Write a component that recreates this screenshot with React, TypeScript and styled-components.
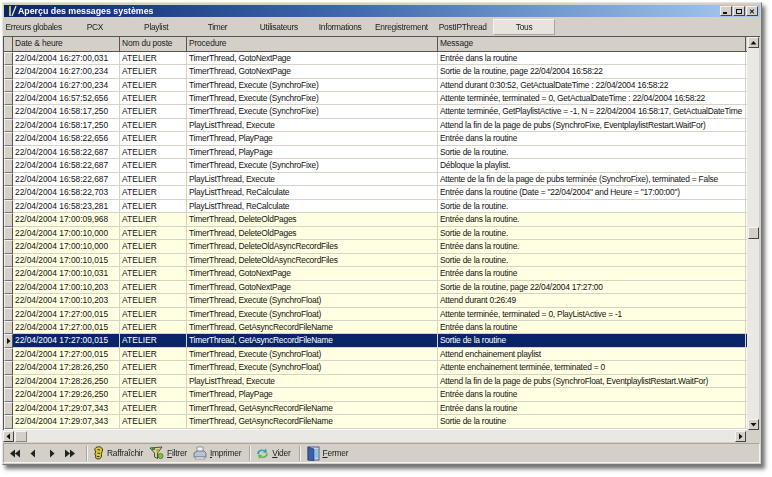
import React from 'react';
import styled, {createGlobalStyle} from 'styled-components';

type Row = {
    date: string;
    proc: string;
    message: string;
    night?: boolean;
    selected?: boolean;
};

const TABS = ['Erreurs globales', 'PCX', 'Playlist', 'Timer', 'Utilisateurs', 'Informations', 'Enregistrement', 'PostIPThread', 'Tous'];

const ROWS: Row[] = [
    {date: '22/04/2004 16:27:00,031', proc: 'TimerThread, GotoNextPage', message: 'Entrée dans la routine'},
    {date: '22/04/2004 16:27:00,234', proc: 'TimerThread, GotoNextPage', message: 'Sortie de la routine, page 22/04/2004 16:58:22'},
    {date: '22/04/2004 16:27:00,234', proc: 'TimerThread, Execute (SynchroFixe)', message: 'Attend durant 0:30:52, GetActualDateTime : 22/04/2004 16:58:22'},
    {date: '22/04/2004 16:57:52,656', proc: 'TimerThread, Execute (SynchroFixe)', message: 'Attente terminée, terminated = 0, GetActualDateTime : 22/04/2004 16:58:22'},
    {date: '22/04/2004 16:58:17,250', proc: 'TimerThread, Execute (SynchroFixe)', message: 'Attente terminée, GetPlaylistActive = -1, N = 22/04/2004 16:58:17, GetActualDateTime'},
    {date: '22/04/2004 16:58:17,250', proc: 'PlayListThread, Execute', message: 'Attend la fin de la page de pubs (SynchroFixe, EventplaylistRestart.WaitFor)'},
    {date: '22/04/2004 16:58:22,656', proc: 'TimerThread, PlayPage', message: 'Entrée dans la routine'},
    {date: '22/04/2004 16:58:22,687', proc: 'TimerThread, PlayPage', message: 'Sortie de la routine.'},
    {date: '22/04/2004 16:58:22,687', proc: 'TimerThread, Execute (SynchroFixe)', message: 'Débloque la playlist.'},
    {date: '22/04/2004 16:58:22,687', proc: 'PlayListThread, Execute', message: 'Attente de la fin de la page de pubs terminée (SynchroFixe), terminated = False'},
    {date: '22/04/2004 16:58:22,703', proc: 'PlayListThread, ReCalculate', message: 'Entrée dans la routine (Date = "22/04/2004" and Heure = "17:00:00")'},
    {date: '22/04/2004 16:58:23,281', proc: 'PlayListThread, ReCalculate', message: 'Sortie de la routine.'},
    {date: '22/04/2004 17:00:09,968', proc: 'TimerThread, DeleteOldPages', message: 'Entrée dans la routine.', night: true},
    {date: '22/04/2004 17:00:10,000', proc: 'TimerThread, DeleteOldPages', message: 'Sortie de la routine.', night: true},
    {date: '22/04/2004 17:00:10,000', proc: 'TimerThread, DeleteOldAsyncRecordFiles', message: 'Entrée dans la routine.', night: true},
    {date: '22/04/2004 17:00:10,015', proc: 'TimerThread, DeleteOldAsyncRecordFiles', message: 'Sortie de la routine.', night: true},
    {date: '22/04/2004 17:00:10,031', proc: 'TimerThread, GotoNextPage', message: 'Entrée dans la routine', night: true},
    {date: '22/04/2004 17:00:10,203', proc: 'TimerThread, GotoNextPage', message: 'Sortie de la routine, page 22/04/2004 17:27:00', night: true},
    {date: '22/04/2004 17:00:10,203', proc: 'TimerThread, Execute (SynchroFloat)', message: 'Attend durant 0:26:49', night: true},
    {date: '22/04/2004 17:27:00,015', proc: 'TimerThread, Execute (SynchroFloat)', message: 'Attente terminée, terminated = 0, PlayListActive = -1', night: true},
    {date: '22/04/2004 17:27:00,015', proc: 'TimerThread, GetAsyncRecordFileName', message: 'Entrée dans la routine', night: true},
    {date: '22/04/2004 17:27:00,015', proc: 'TimerThread, GetAsyncRecordFileName', message: 'Sortie de la routine', night: true, selected: true},
    {date: '22/04/2004 17:27:00,015', proc: 'TimerThread, Execute (SynchroFloat)', message: 'Attend enchainement playlist', night: true},
    {date: '22/04/2004 17:28:26,250', proc: 'TimerThread, Execute (SynchroFloat)', message: 'Attente enchainement terminée, terminated = 0', night: true},
    {date: '22/04/2004 17:28:26,250', proc: 'PlayListThread, Execute', message: 'Attend la fin de la page de pubs (SynchroFloat, EventplaylistRestart.WaitFor)', night: true},
    {date: '22/04/2004 17:29:26,250', proc: 'TimerThread, PlayPage', message: 'Entrée dans la routine', night: true},
    {date: '22/04/2004 17:29:07,343', proc: 'TimerThread, GetAsyncRecordFileName', message: 'Entrée dans la routine', night: true},
    {date: '22/04/2004 17:29:07,343', proc: 'TimerThread, GetAsyncRecordFileName', message: 'Sortie de la routine', night: true},
];

const GlobalStyle = createGlobalStyle`
    html, body {
        margin: 0;
        padding: 0;
        background: #fff;
    }

    body {
        font-family: "Liberation Sans", Arial, sans-serif;
        font-size: 8.4px;
        letter-spacing: -0.22px;
        color: #111;
    }
`;

const Arrow = ({dir, size = 7}: {dir: 'up' | 'down' | 'left' | 'right'; size?: number}) => {
    const points = {
        up: '0.5,5.5 3.5,2 6.5,5.5',
        down: '0.5,2 3.5,5.5 6.5,2',
        left: '5,0.5 1.5,3.5 5,6.5',
        right: '2,0.5 5.5,3.5 2,6.5',
    }[dir];
    return (
        <svg width={size} height={size} viewBox="0 0 7 7"><polygon points={points} fill="#111"/></svg>
    );
};

const NavIcon = ({kind}: {kind: 'first' | 'prev' | 'next' | 'last'}) => (
    <svg width="12" height="9" viewBox="0 0 12 9">
        {kind === 'first' && <path d="M6 0.5 L1 4.5 L6 8.5Z M11 0.5 L6 4.5 L11 8.5Z" fill="#222"/>}
        {kind === 'prev' && <path d="M8 0.5 L3.5 4.5 L8 8.5Z" fill="#222"/>}
        {kind === 'next' && <path d="M4 0.5 L8.5 4.5 L4 8.5Z" fill="#222"/>}
        {kind === 'last' && <path d="M1 0.5 L6 4.5 L1 8.5Z M6 0.5 L11 4.5 L6 8.5Z" fill="#222"/>}
    </svg>
);

const RefreshIcon = () => (
    <svg width="11" height="14" viewBox="0 0 11 14">
        <path d="M3 1.5 C6 0 9.5 1 9.5 4 C9.5 6 8 6.5 8.5 8.5 C9 11 7.5 13 5 13 C2.5 13 2 11 3 10 C1.5 8.5 1.5 7 3 6 C1.5 4.5 1.5 2.5 3 1.5Z" fill="#d8c83a" stroke="#3a3510" strokeWidth="1"/>
        <path d="M4.5 3.5 L7 4 M4.5 7 L7 7.5 M4 10.5 L6.5 10.5" stroke="#3a3510" strokeWidth="1.1"/>
    </svg>
);

const FilterIcon = () => (
    <svg width="15" height="14" viewBox="0 0 15 14">
        <path d="M1 2 L13 1 L8.5 7 L8.5 12.5 L5.5 11 L5.5 7Z" fill="#d9d2a0" stroke="#3d3d2a" strokeWidth="0.9"/>
        <rect x="3" y="1" width="3" height="3" fill="#3d8a3a"/>
        <rect x="7" y="3" width="3" height="2.5" fill="#c9a82c"/>
        <circle cx="11.5" cy="10" r="2.6" fill="#7ec23e" stroke="#3a6b1d" strokeWidth="0.7"/>
    </svg>
);

const PrintIcon = () => (
    <svg width="14" height="14" viewBox="0 0 14 14">
        <path d="M4 1 L10 1 L10 6 L4 6Z" fill="#f4f4f4" stroke="#777" strokeWidth="0.7"/>
        <path d="M1 7 L4 5 L11 5 L13 7 L13 11 L1 11Z" fill="#b9c2d4" stroke="#5d6680" strokeWidth="0.8"/>
        <path d="M3 11 L11 11 L12 13 L2 13Z" fill="#eef0f4" stroke="#7b8296" strokeWidth="0.6"/>
    </svg>
);

const EmptyIcon = () => (
    <svg width="13" height="13" viewBox="0 0 13 13">
        <path d="M1 7 C1 3 5 1.5 8.5 3 L10 1.5 L11 6 L6.5 5.5 L8 4.2 C5.5 3.5 3 4.5 3 7Z" fill="#3fa0b5"/>
        <path d="M12 6.5 C12 10 8 12 4.5 10.5 L3 12 L2 7.5 L6.5 8 L5 9.3 C7.5 10 10 9 10 6.5Z" fill="#68b54a"/>
    </svg>
);

const DoorIcon = () => (
    <svg width="14" height="15" viewBox="-1 0 14 15">
        <rect x="1" y="1" width="11" height="13" fill="#c9d6ee" stroke="#31437c" strokeWidth="0.8"/>
        <path d="M1 1 L7 3 L7 14.5 L1 14Z" fill="#3e5fb0" stroke="#24356b" strokeWidth="0.7"/>
        <rect x="8" y="3" width="3" height="9" fill="#8fc7d8"/>
    </svg>
);

const LogoIcon = () => (
    <svg width="9" height="12" viewBox="0 0 9 12">
        <path d="M2 1 L2 11" stroke="#e8e26a" strokeWidth="1.6"/>
        <path d="M8 1 L4 11" stroke="#f1f1d0" strokeWidth="1.2"/>
    </svg>
);

const App = () => (
    <Page>
        <GlobalStyle/>
        <Window>
            <TitleBar>
                <LogoIcon/>
                <Title>Aperçu des messages systèmes</Title>
                <WindowButtons>
                    <WindowButton><Minimize/></WindowButton>
                    <WindowButton><Maximize/></WindowButton>
                    <WindowButton><CloseGlyph>✕</CloseGlyph></WindowButton>
                </WindowButtons>
            </TitleBar>

            <TabBar>
                {TABS.map(tab => <Tab key={tab} $active={tab === 'Tous'}>{tab}</Tab>)}
            </TabBar>

            <GridFrame>
                <GridBody>
                    <HeaderRow>
                        <Corner/>
                        <HeaderCell $col="date">Date &amp; heure</HeaderCell>
                        <HeaderCell $col="post">Nom du poste</HeaderCell>
                        <HeaderCell $col="proc">Procedure</HeaderCell>
                        <HeaderCell $col="msg">Message</HeaderCell>
                    </HeaderRow>
                    {ROWS.map((row, i) => (
                        <DataRow key={i} $night={row.night} $selected={row.selected}>
                            <Indicator>{row.selected && <Arrow dir="right" size={8}/>}</Indicator>
                            <Cell $col="date">{row.date}</Cell>
                            <Cell $col="post">ATELIER</Cell>
                            <Cell $col="proc">{row.proc}</Cell>
                            <Cell $col="msg">{row.message}</Cell>
                        </DataRow>
                    ))}
                </GridBody>
                <VScroll>
                    <ScrollButton><Arrow dir="up"/></ScrollButton>
                    <VTrack>
                        <VThumb/>
                    </VTrack>
                    <ScrollButton><Arrow dir="down"/></ScrollButton>
                </VScroll>
            </GridFrame>

            <HScroll>
                <ScrollButton><Arrow dir="left"/></ScrollButton>
                <HThumb/>
                <HTrack/>
                <ScrollButton><Arrow dir="right"/></ScrollButton>
                <ScrollCorner/>
            </HScroll>

            <Toolbar>
                <NavGroup>
                    <NavIcon kind="first"/>
                    <NavIcon kind="prev"/>
                    <NavIcon kind="next"/>
                    <NavIcon kind="last"/>
                </NavGroup>
                <Separator/>
                <ToolGroup>
                    <ToolButton><RefreshIcon/>Raffraîchir</ToolButton>
                    <ToolButton><FilterIcon/><span><u>F</u>iltrer</span></ToolButton>
                    <ToolButton><PrintIcon/><span><u>I</u>mprimer</span></ToolButton>
                </ToolGroup>
                <Separator/>
                <ToolGroup>
                    <ToolButton><EmptyIcon/><span><u>V</u>ider</span></ToolButton>
                </ToolGroup>
                <Separator/>
                <ToolGroup>
                    <ToolButton><DoorIcon/><span><u>F</u>ermer</span></ToolButton>
                </ToolGroup>
            </Toolbar>
        </Window>
    </Page>
);

export default App;

const COLS: {[key: string]: string} = {
    date: '107px',
    post: '67px',
    proc: '251px',
    msg: '308px',
};

const SPACING: {[key: string]: string} = {
    date: '0',
    post: '0.1px',
    proc: '-0.22px',
    msg: '-0.22px',
};

const Page = styled.div`
    width: 772px;
    height: 477px;
    padding: 2px 0 0 2px;
    box-sizing: border-box;
    overflow: hidden;
    filter: blur(0.2px);
`;

const Window = styled.div`
    width: 760px;
    height: 463px;
    box-sizing: border-box;
    background: #d4d0c8;
    border: 1px solid #e6e4de;
    border-right-color: #777;
    border-bottom-color: #777;
    padding: 2px 1px 1px 0;
    box-shadow: 3px 4px 4px rgba(70, 70, 70, 0.75);
    display: flex;
    flex-direction: column;
`;

const TitleBar = styled.div`
    height: 12px;
    flex: none;
    display: flex;
    align-items: center;
    gap: 1px;
    margin-left: 1px;
    padding: 0 2px 0 4px;
    background: linear-gradient(90deg, #0a246a 0%, #3f68ad 45%, #a6caf0 100%);
`;

const Title = styled.span`
    flex: 1;
    color: #fff;
    font-weight: bold;
    font-size: 8.8px;
    letter-spacing: 0;
`;

const WindowButtons = styled.div`
    display: flex;
    gap: 1px;
`;

const WindowButton = styled.div`
    width: 12px;
    height: 10px;
    box-sizing: border-box;
    background: #d4d0c8;
    border: 1px solid #f4f3ef;
    border-right-color: #444;
    border-bottom-color: #444;
    display: flex;
    align-items: center;
    justify-content: center;
`;

const Minimize = styled.span`
    width: 4px;
    height: 1.5px;
    background: #111;
    margin: 4px 3px 0 0;
`;

const Maximize = styled.span`
    width: 6px;
    height: 5px;
    box-sizing: border-box;
    border: 1px solid #111;
    border-top-width: 1.5px;
`;

const CloseGlyph = styled.span`
    font-size: 7px;
    line-height: 1;
    font-weight: bold;
    color: #111;
`;

const TabBar = styled.div`
    height: 19px;
    flex: none;
    display: flex;
    align-items: center;
`;

const Tab = styled.div<{$active?: boolean}>`
    width: 61.3px;
    height: ${props => (props.$active ? '16px' : 'auto')};
    flex: none;
    display: flex;
    align-items: center;
    justify-content: center;
    white-space: nowrap;
    letter-spacing: -0.28px;
    color: #222;
    box-sizing: border-box;
    background: ${props => (props.$active ? '#e6e4dc' : 'transparent')};
    border: ${props => (props.$active ? '1px solid #f6f5f1' : 'none')};
    border-right-color: #a8a59c;
    border-bottom-color: #a8a59c;
`;

const GridFrame = styled.div`
    height: 394px;
    flex: none;
    display: flex;
    box-sizing: border-box;
    border: 1px solid #555;
    border-right: none;
    border-bottom: none;
`;

const GridBody = styled.div`
    width: 743px;
    flex: none;
    overflow: hidden;
    background: #fff;
`;

const HeaderRow = styled.div`
    display: flex;
    height: 13.6px;
    background: #d4d0c8;
    border-bottom: 1px solid #555;
    color: #222;
`;

const Corner = styled.div`
    width: 9px;
    flex: none;
    box-sizing: border-box;
    border-right: 1px solid #555;
`;

const HeaderCell = styled.div<{$col: string}>`
    width: ${props => COLS[props.$col]};
    flex: none;
    box-sizing: border-box;
    padding-left: 2px;
    line-height: 13.6px;
    letter-spacing: -0.15px;
    border-right: 1px solid #555;
    white-space: nowrap;
`;

const DataRow = styled.div<{$night?: boolean; $selected?: boolean}>`
    display: flex;
    height: 13.48px;
    box-sizing: border-box;
    background: ${props => {
        if (props.$selected) return '#0a246a';
        return props.$night ? '#ffffe1' : '#fff';
    }};
    color: ${props => (props.$selected ? '#fff' : '#111')};
    border-bottom: 1px solid #d6d3c8;
`;

const Indicator = styled.div`
    width: 9px;
    flex: none;
    box-sizing: border-box;
    margin-bottom: -1px;
    background: #d4d0c8;
    border: 1px solid #f2f1ec;
    border-right-color: #555;
    border-bottom-color: #777;
    display: flex;
    align-items: center;
    justify-content: center;
`;

const Cell = styled.div<{$col: string}>`
    width: ${props => COLS[props.$col]};
    flex: none;
    box-sizing: border-box;
    padding-left: 2px;
    line-height: 12.5px;
    letter-spacing: ${props => SPACING[props.$col]};
    border-right: 1px solid #d6d3c8;
    white-space: nowrap;
    overflow: hidden;
`;

const ScrollButton = styled.div`
    width: 11px;
    height: 11px;
    flex: none;
    box-sizing: border-box;
    background: #d4d0c8;
    border: 1px solid #f4f3ef;
    border-right-color: #444;
    border-bottom-color: #444;
    display: flex;
    align-items: center;
    justify-content: center;
`;

const VScroll = styled.div`
    width: 12px;
    flex: none;
    display: flex;
    flex-direction: column;
    align-items: center;
    background: #e9e8e4;
`;

const VTrack = styled.div`
    flex: 1;
    width: 100%;
    padding-top: 179px;
    display: flex;
    justify-content: center;
    box-sizing: border-box;
`;

const VThumb = styled.div`
    width: 11px;
    height: 12px;
    box-sizing: border-box;
    background: #d4d0c8;
    border: 1px solid #f4f3ef;
    border-right-color: #444;
    border-bottom-color: #444;
`;

const HScroll = styled.div`
    height: 12px;
    flex: none;
    display: flex;
    align-items: center;
    background: #e9e8e4;
`;

const HThumb = styled.div`
    width: 12px;
    height: 11px;
    flex: none;
    margin-left: 1px;
    box-sizing: border-box;
    background: #d4d0c8;
    border: 1px solid #f4f3ef;
    border-right-color: #888;
    border-bottom-color: #888;
`;

const HTrack = styled.div`
    flex: 1;
`;

const ScrollCorner = styled.div`
    width: 14px;
    height: 12px;
    flex: none;
    background: #d4d0c8;
`;

const Toolbar = styled.div`
    flex: 1;
    display: flex;
    align-items: center;
    box-sizing: border-box;
    margin-top: 1px;
    padding-left: 5px;
    border: 1px solid #a8a59c;
    border-right-color: #f4f3ef;
    border-bottom-color: #f4f3ef;
    color: #222;
`;

const NavGroup = styled.div`
    display: flex;
    gap: 6.4px;
    width: 77px;
    flex: none;
`;

const Separator = styled.div`
    width: 1px;
    height: 15px;
    flex: none;
    background: #a8a59c;
    border-right: 1px solid #f4f3ef;
`;

const ToolGroup = styled.div`
    display: flex;
    align-items: center;
    gap: 6px;
    padding: 0 8px 0 5px;
`;

const ToolButton = styled.div`
    display: flex;
    align-items: center;
    gap: 3px;
    white-space: nowrap;
`;
